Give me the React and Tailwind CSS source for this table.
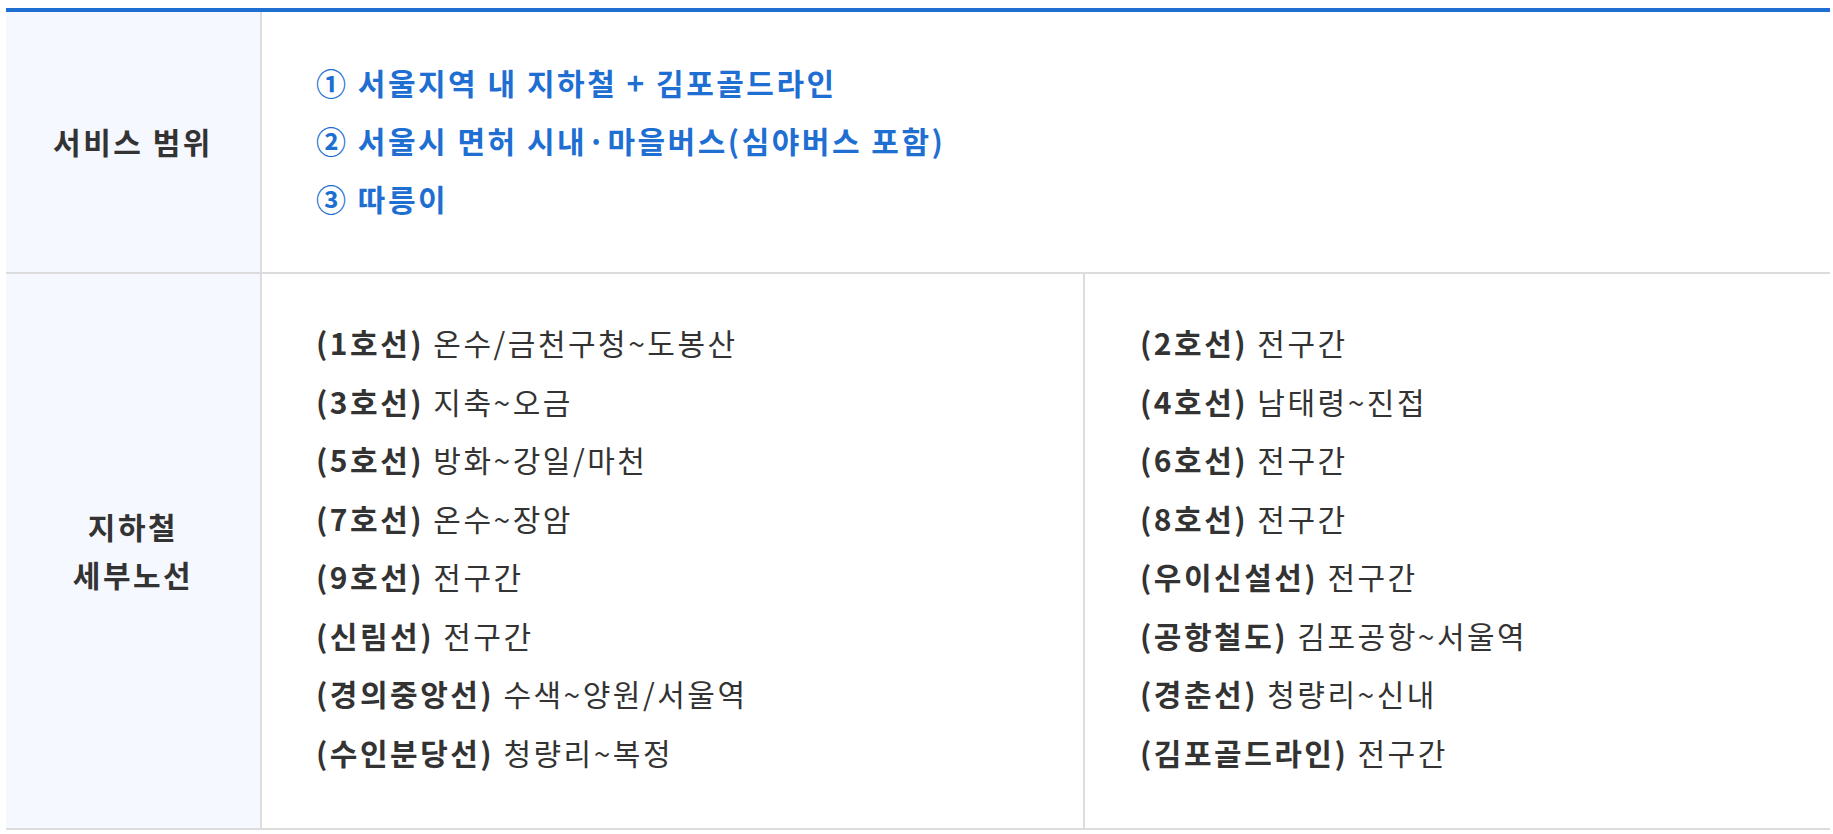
const SCOPE = [
  "① 서울지역 내 지하철 + 김포골드라인",
  "② 서울시 면허 시내·마을버스(심야버스 포함)",
  "③ 따릉이",
];

const LEFT = [
  ["(1호선)", "온수/금천구청~도봉산"],
  ["(3호선)", "지축~오금"],
  ["(5호선)", "방화~강일/마천"],
  ["(7호선)", "온수~장암"],
  ["(9호선)", "전구간"],
  ["(신림선)", "전구간"],
  ["(경의중앙선)", "수색~양원/서울역"],
  ["(수인분당선)", "청량리~복정"],
];

const RIGHT = [
  ["(2호선)", "전구간"],
  ["(4호선)", "남태령~진접"],
  ["(6호선)", "전구간"],
  ["(8호선)", "전구간"],
  ["(우이신설선)", "전구간"],
  ["(공항철도)", "김포공항~서울역"],
  ["(경춘선)", "청량리~신내"],
  ["(김포골드라인)", "전구간"],
];

function LineList({ items }) {
  return (
    <ul className="flex flex-col">
      {items.map(([name, range]) => (
        <li key={name} className="leading-[58.5px]">
          <strong className="font-bold">{name}</strong> {range}
        </li>
      ))}
    </ul>
  );
}

export default function App() {
  return (
    <div
      className="min-h-[834px] bg-white pl-[6px] pt-[8px] text-[#333]"
      style={{ fontFamily: '"Noto Sans CJK KR", "Noto Sans", sans-serif' }}
    >
      <div className="w-[1824px] border-t-4 border-[#1f6fd3] text-[30px] tracking-[2.5px]">
        <div className="grid grid-cols-[256px_1fr] border-b-2 border-[#dcdcdc]">
          <div className="flex items-center justify-center border-r-2 border-[#dcdcdc] bg-[#f5f8fe] pb-[2px] font-bold">
            서비스 범위
          </div>
          <ul className="flex flex-col pb-[45px] pl-[54px] pt-[41px] font-bold text-[#1f6fd3]">
            {SCOPE.map((s) => (
              <li key={s} className="leading-[58px]">
                {s}
              </li>
            ))}
          </ul>
        </div>

        <div className="grid grid-cols-[256px_823px_1fr] border-b-2 border-[#dcdcdc]">
          <div className="flex items-center justify-center border-r-2 border-[#dcdcdc] bg-[#f5f8fe] pb-[2px] text-center font-bold leading-[48px]">
            지하철
            <br />
            세부노선
          </div>
          <div className="border-r-2 border-[#dcdcdc] pb-[47px] pl-[54px] pt-[39px]">
            <LineList items={LEFT} />
          </div>
          <div className="pb-[47px] pl-[55px] pt-[39px]">
            <LineList items={RIGHT} />
          </div>
        </div>
      </div>
    </div>
  );
}
